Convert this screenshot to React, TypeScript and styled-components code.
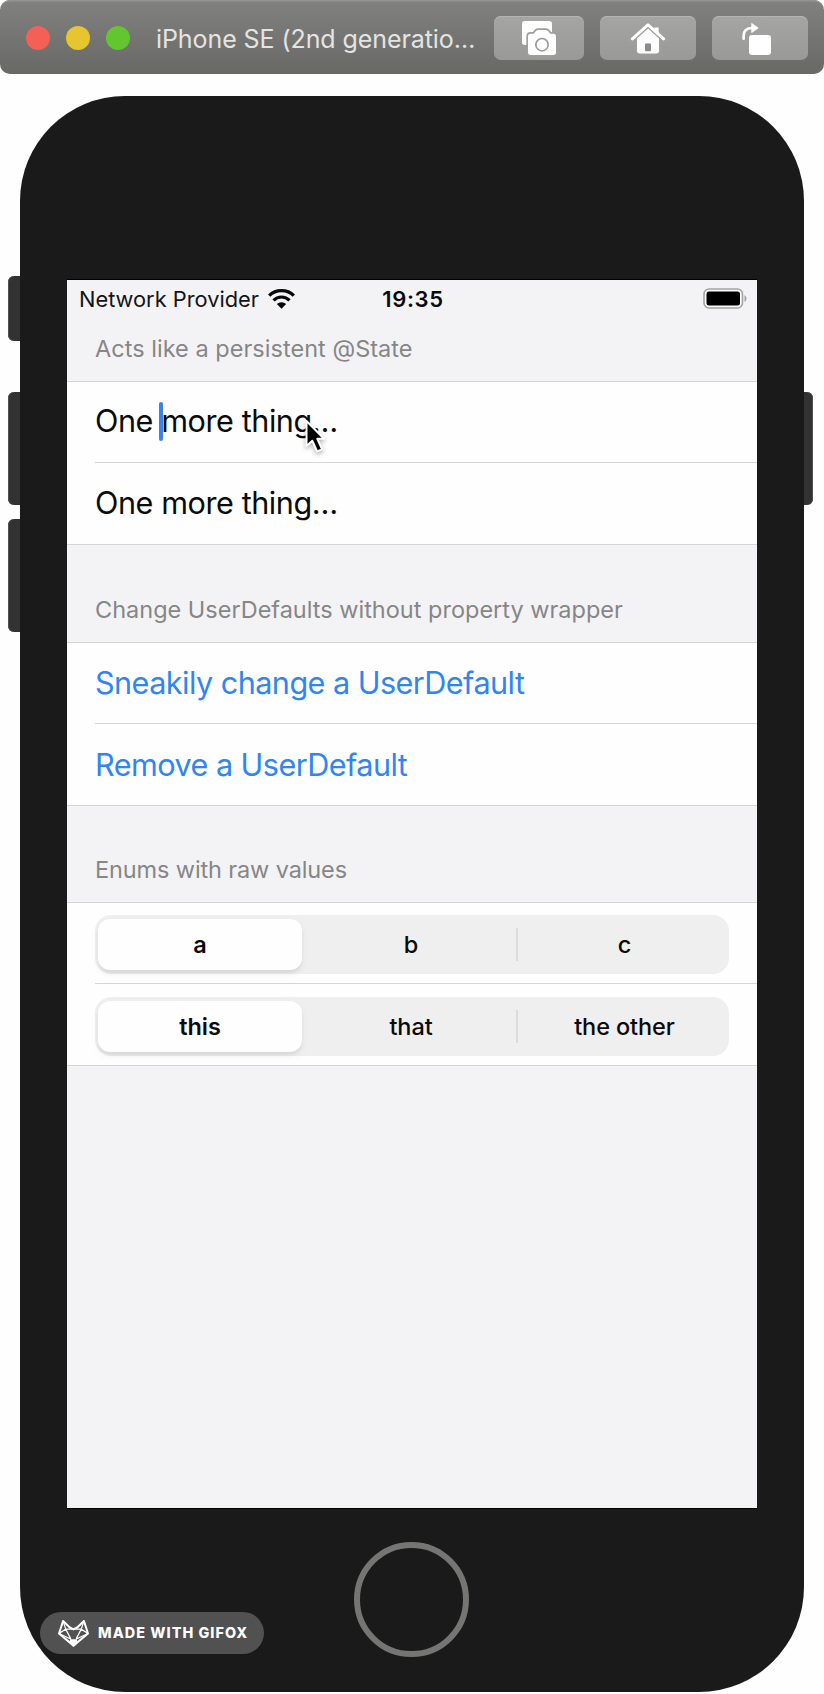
import React from "react";
import styled, { createGlobalStyle } from "styled-components";

const GlobalStyle = createGlobalStyle`
  *, *::before, *::after { box-sizing: border-box; }
  body {
    margin: 0;
    background: #fefefe;
    font-family: Inter, "Liberation Sans", sans-serif;
    color: #0b0b0b;
  }
  svg { display: block; flex: none; overflow: visible; }
`;

const Page = styled.div`
  position: relative;
  width: 824px;
  height: 1694px;
  overflow: hidden;
`;

/* Simulator window title bar */

const TitleBar = styled.header`
  display: flex;
  align-items: center;
  height: 74px;
  padding: 2px 16px 0 26px;
  border-radius: 10px;
  background: linear-gradient(#81817f, #686866);
  box-shadow: inset 0 2px 0 -0.5px #939391;
`;

const TrafficLights = styled.div`
  display: flex;
  gap: 16px;
`;

const Light = styled.span<{ $color: string }>`
  width: 24px;
  height: 24px;
  border-radius: 50%;
  background: ${(p) => p.$color};
`;

const WindowTitle = styled.h1`
  flex: 1;
  margin: 2px 0 0 26px;
  font-size: 25px;
  font-weight: 400;
  line-height: 32px;
  letter-spacing: -0.08px;
  white-space: nowrap;
  color: #e4e4e3;
`;

const ToolButton = styled.button<{ $width: number }>`
  display: flex;
  align-items: center;
  justify-content: center;
  width: ${(p) => p.$width}px;
  height: 44px;
  margin: 0 0 0 16px;
  padding: 0;
  border: 0;
  border-radius: 7px;
  background: linear-gradient(#a5a5a4, #999997);
  box-shadow: inset 0 1px 0 #b5b5b4;
`;

const RotateGlyph = styled.svg`
  margin: 2px 7px 0 0;
`;

/* Phone hardware */

const Phone = styled.main`
  display: flex;
  margin-top: 22px;
`;

const KeyColumn = styled.div<{ $side: "left" | "right" }>`
  display: flex;
  flex-direction: column;
  width: ${(p) => (p.$side === "left" ? 12 : 9)}px;
  margin-left: ${(p) => (p.$side === "left" ? 8 : 0)}px;
  padding-top: ${(p) => (p.$side === "left" ? 180 : 296)}px;
`;

const Key = styled.span<{ $height: number; $gap?: number; $side: "left" | "right" }>`
  height: ${(p) => p.$height}px;
  margin-bottom: ${(p) => p.$gap ?? 0}px;
  border-radius: ${(p) => (p.$side === "left" ? "6px 0 0 6px" : "0 6px 6px 0")};
  background: #323232;
  box-shadow: inset ${(p) => (p.$side === "left" ? 1 : -1)}px 0 0 #505050;
`;

const Body = styled.div`
  display: flex;
  flex-direction: column;
  align-items: center;
  width: 784px;
  height: 1596px;
  padding-top: 183px;
  border-radius: 105px;
  background: #1a1a1a;
`;

const Screen = styled.section`
  width: 690px;
  height: 1230px;
  border: solid #000;
  border-width: 1px 0;
  background: #f3f3f6;
`;

const HomeButton = styled.span`
  width: 115px;
  height: 115px;
  margin: 33px 2px 0 0;
  border: 6px solid #757573;
  border-radius: 50%;
`;

/* Status bar */

const StatusBar = styled.div`
  display: grid;
  grid-template-columns: 1fr auto 1fr;
  align-items: center;
  height: 37px;
  padding: 0 10px 0 12px;
`;

const Carrier = styled.div`
  display: flex;
  align-items: center;
  gap: 9px;
  font-size: 21.8px;
  line-height: 27px;
  white-space: nowrap;
  color: #141414;
`;

const CarrierName = styled.span`
  margin-top: 1px;
`;

const Clock = styled.time`
  margin-top: 1px;
  font-size: 22px;
  font-weight: 600;
  line-height: 27px;
  letter-spacing: 0.65px;
`;

const BatterySlot = styled.div`
  display: flex;
  justify-content: flex-end;
  margin-top: -1px;
`;

/* Form */

const SectionHeader = styled.h2<{ $height: number; $tracking?: number }>`
  display: flex;
  align-items: flex-end;
  height: ${(p) => p.$height}px;
  margin: 0;
  padding: 0 0 18px 28px;
  font-size: 23.5px;
  font-weight: 400;
  line-height: 29px;
  letter-spacing: ${(p) => p.$tracking ?? 0}px;
  white-space: nowrap;
  color: #868686;
`;

const Group = styled.div`
  border: solid #d5d5d7;
  border-width: 1px 0;
  background: #fefefe;
`;

const Row = styled.div`
  display: flex;
  align-items: center;
  height: 81px;
  margin-left: 28px;
  font-size: 30.6px;
  line-height: 38px;
  white-space: nowrap;

  &:not(:last-child) {
    border-bottom: 1px solid #d5d5d7;
  }
`;

const TextValue = styled.span<{ $editing?: boolean }>`
  margin-top: ${(p) => (p.$editing ? -3 : -1)}px;
  letter-spacing: -0.43px;
`;

const CaretAnchor = styled.span`
  position: relative;
`;

const Caret = styled.span`
  position: absolute;
  left: -2px;
  top: 0;
  width: 4px;
  height: 39px;
  border-radius: 2px;
  background: #3a83ea;
`;

const ActionLabel = styled.button`
  padding: 0;
  border: 0;
  background: none;
  font: inherit;
  letter-spacing: -0.54px;
  color: #2f86f3;
`;

const Segmented = styled.div`
  display: grid;
  grid-template-columns: 207px 214px 1fr;
  width: 634px;
  height: 59px;
  margin-top: 3px;
  border-radius: 16px;
  background: #efefef;
`;

const Segment = styled.button<{ $selected?: boolean; $divided?: boolean }>`
  display: flex;
  align-items: center;
  justify-content: center;
  margin: ${(p) => (p.$selected ? "4px 0 4px 3px" : "0")};
  padding: ${(p) => (p.$selected ? "0" : "0 0 0 4px")};
  border: 0;
  border-radius: ${(p) => (p.$selected ? "12px" : "0")};
  background: ${(p) =>
    p.$selected
      ? "#fefefe"
      : p.$divided
        ? "linear-gradient(#dbdbdb, #dbdbdb) 0 13px / 2px 33px no-repeat"
        : "none"};
  box-shadow: ${(p) => (p.$selected ? "0 3px 3px rgba(0,0,0,0.06), 0 4px 10px rgba(0,0,0,0.05)" : "none")};
  font-family: inherit;
  font-size: 23.5px;
  font-weight: ${(p) => (p.$selected ? 600 : 500)};
  line-height: 29px;
  letter-spacing: -0.1px;
  color: #0b0b0b;
`;

/* Overlays */

const Pointer = styled.svg`
  position: absolute;
  left: 300px;
  top: 415px;
  filter: drop-shadow(0 2px 2px rgba(0, 0, 0, 0.3));
`;

const Badge = styled.div`
  position: absolute;
  left: 40px;
  top: 1612px;
  display: flex;
  align-items: center;
  width: 224px;
  height: 42px;
  padding-left: 18px;
  border-radius: 21px;
  background: #515151;
  font-size: 14.4px;
  font-weight: 800;
  letter-spacing: 1.05px;
  white-space: nowrap;
  color: #fcfcfc;
`;

const BadgeText = styled.span`
  margin-left: 9px;
  line-height: 18px;
`;

const CameraIcon = () => (
  <svg width="34" height="34" viewBox="0 0 102 102">
    <path d="M8 0h74q8 0 8 8v64H8q-8 0-8-8V8q0-8 8-8z" fill="#fff" />
    <path
      d="M26 38h9l7-8q3-3 7-3h22q4 0 7 3l7 8h9q8 0 8 8v48q0 8-8 8H26q-8 0-8-8V46q0-8 8-8z"
      fill="#fff"
      stroke="#9e9e9d"
      strokeWidth="10"
      paintOrder="stroke"
    />
    <circle cx="60" cy="71" r="18.5" fill="none" stroke="#9b9b9a" strokeWidth="5" />
  </svg>
);

const HomeIcon = () => (
  <svg width="34" height="31" viewBox="0 0 102 92">
    <path d="M70 13h13v26L70 28z" fill="#fff" />
    <path d="M4 47 51 5l47 42" fill="none" stroke="#fff" strokeWidth="9" strokeLinecap="round" strokeLinejoin="round" />
    <path
      d="M51 16 84 46v37q0 8-8 8H26q-8 0-8-8V46z"
      fill="#fff"
      stroke="#9e9e9d"
      strokeWidth="6"
      paintOrder="stroke"
    />
    <rect x="42" y="61" width="18" height="23" rx="2" fill="#8a8a89" />
  </svg>
);

const RotateIcon = () => (
  <RotateGlyph width="29" height="32" viewBox="0 0 87 96">
    <path d="M5 47V38q0-22 24-23" fill="none" stroke="#fff" strokeWidth="8" strokeLinecap="round" />
    <path d="M29 1 49 15 29 29z" fill="#fff" stroke="#fff" strokeWidth="2" strokeLinejoin="round" />
    <rect x="21" y="36" width="66" height="60" rx="9" fill="#fff" />
  </RotateGlyph>
);

const WifiIcon = () => (
  <svg width="27" height="20" viewBox="0 0 80 60">
    <g fill="none" stroke="#050505" strokeWidth="9.5">
      <path d="M3 20Q18 5 40 5t37 15" />
      <path d="M16 34Q26 24 40 24t24 10" />
    </g>
    <path d="M26 45q6-5.500 14-5.500T54 45L40 59z" fill="#050505" />
  </svg>
);

const BatteryIcon = () => (
  <svg width="44" height="21" viewBox="0 0 44 21">
    <rect x="1" y="1" width="38.500" height="19" rx="5" fill="#fbfbfb" stroke="#a3a3a3" strokeWidth="1.600" />
    <rect x="3.500" y="3.500" width="33.500" height="14" rx="2.500" fill="#000" />
    <path d="M41.500 7q2 1 2 3.500t-2 3.500z" fill="#a3a3a3" />
  </svg>
);

const FoxIcon = () => (
  <svg width="31" height="27" viewBox="0 0 92 80">
    <g fill="none" stroke="#fff" strokeWidth="6" strokeLinejoin="round">
      <path d="M15 3 3 40l43 36 43-36L77 3 57 22 46 28 35 22z" />
      <path d="M15 3 23 27 3 40M77 3 69 27 89 40M23 27h46M23 27 38 56M69 27 54 56M3 40l36 17M89 40 53 57" strokeWidth="3.6" />
    </g>
    <path d="M36 57h20l2 10-12 12-12-12z" fill="#fff" />
  </svg>
);

type SegmentedControlProps = { options: string[]; selected: number };

const SegmentedControl = ({ options, selected }: SegmentedControlProps) => (
  <Segmented>
    {options.map((option, i) => (
      <Segment key={option} $selected={i === selected} $divided={i > selected + 1}>
        {option}
      </Segment>
    ))}
  </Segmented>
);

export default function App() {
  return (
    <Page>
      <GlobalStyle />
      <TitleBar>
        <TrafficLights>
          <Light $color="#f45f56" />
          <Light $color="#e6c52e" />
          <Light $color="#63c530" />
        </TrafficLights>
        <WindowTitle>iPhone SE (2nd generatio…</WindowTitle>
        <ToolButton $width={90}><CameraIcon /></ToolButton>
        <ToolButton $width={96}><HomeIcon /></ToolButton>
        <ToolButton $width={96}><RotateIcon /></ToolButton>
      </TitleBar>

      <Phone>
        <KeyColumn $side="left">
          <Key $side="left" $height={65} $gap={51} />
          <Key $side="left" $height={113} $gap={14} />
          <Key $side="left" $height={113} />
        </KeyColumn>
        <Body>
          <Screen>
            <StatusBar>
              <Carrier>
                <CarrierName>Network Provider</CarrierName>
                <WifiIcon />
              </Carrier>
              <Clock>19:35</Clock>
              <BatterySlot>
                <BatteryIcon />
              </BatterySlot>
            </StatusBar>

            <SectionHeader $height={64} $tracking={0.03}>Acts like a persistent @State</SectionHeader>
            <Group>
              <Row>
                <TextValue $editing>
                  One <CaretAnchor><Caret /></CaretAnchor>more thing…
                </TextValue>
              </Row>
              <Row><TextValue>One more thing…</TextValue></Row>
            </Group>

            <SectionHeader $height={97}>Change UserDefaults without property wrapper</SectionHeader>
            <Group>
              <Row><ActionLabel>Sneakily change a UserDefault</ActionLabel></Row>
              <Row><ActionLabel>Remove a UserDefault</ActionLabel></Row>
            </Group>

            <SectionHeader $height={96} $tracking={-0.12}>Enums with raw values</SectionHeader>
            <Group>
              <Row><SegmentedControl options={["a", "b", "c"]} selected={0} /></Row>
              <Row><SegmentedControl options={["this", "that", "the other"]} selected={0} /></Row>
            </Group>
          </Screen>
          <HomeButton />
        </Body>
        <KeyColumn $side="right">
          <Key $side="right" $height={113} />
        </KeyColumn>
      </Phone>

      <Pointer width="28" height="42" viewBox="0 0 28 42">
        <path
          d="M6.500 6v25l5.800-5.300 4.800 10.800 5-2.200-4.800-10.500h6.800z"
          fill="#000"
          stroke="#fff"
          strokeWidth="2"
          strokeLinejoin="round"
        />
      </Pointer>

      <Badge>
        <FoxIcon />
        <BadgeText>MADE WITH GIFOX</BadgeText>
      </Badge>
    </Page>
  );
}
